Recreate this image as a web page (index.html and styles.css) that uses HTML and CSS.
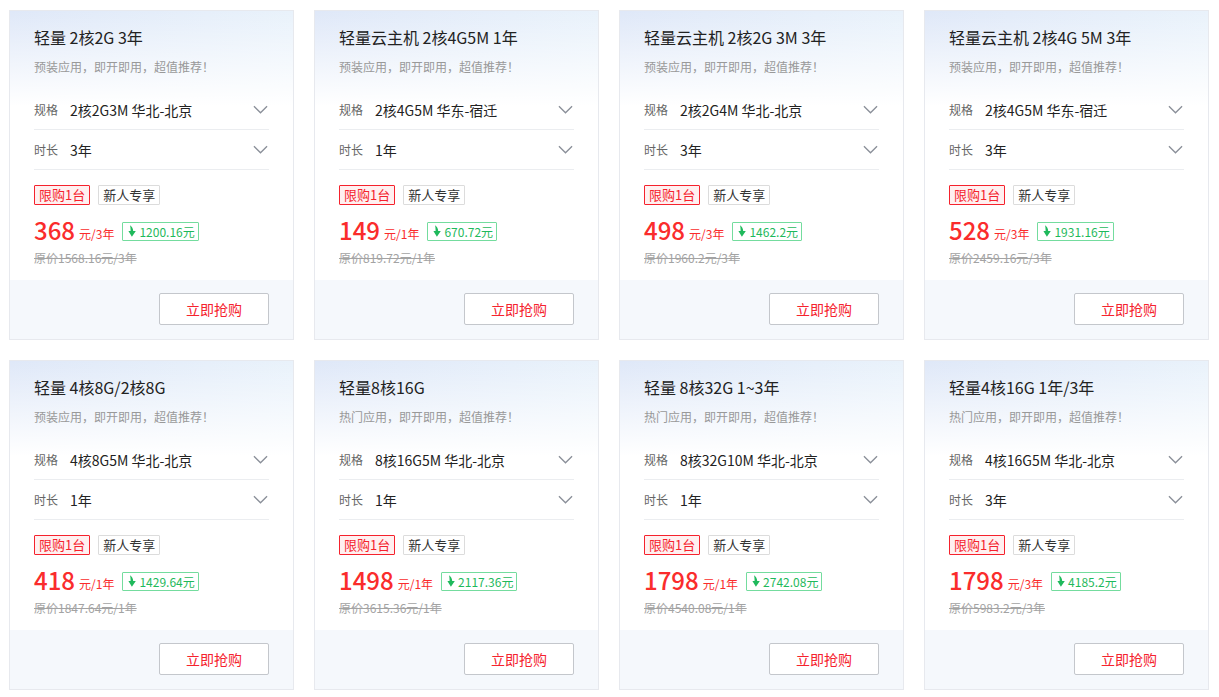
FILE: index.html
```html
<!DOCTYPE html>
<html lang="zh-CN">
<head>
<meta charset="utf-8">
<title>轻量云主机</title>
<link rel="stylesheet" href="styles.css">
</head>
<body>
<div class="grid">

  <div class="card">
    <div class="body">
      <div class="title">轻量 2核2G 3年</div>
      <div class="sub">预装应用，即开即用，超值推荐！</div>
      <div class="row"><span class="lab">规格</span><span class="val">2核2G3M 华北-北京</span><svg class="chev" viewBox="0 0 16 9"><path d="M1 1l7 7 7-7"/></svg></div>
      <div class="row"><span class="lab">时长</span><span class="val">3年</span><svg class="chev" viewBox="0 0 16 9"><path d="M1 1l7 7 7-7"/></svg></div>
      <div class="tags"><span class="tag red">限购1台</span><span class="tag gray">新人专享</span></div>
      <div class="price"><span class="num">368</span><span class="unit">元/3年</span><span class="save"><svg viewBox="0 0 8 12"><path d="M2 0.2C3.6 1.4 5.2 3.4 5.2 6H7.8L3.9 11.8 0.4 6H2.6C2.6 3.9 2.5 1.8 2 0.2z"/></svg>1200.16元</span></div>
      <div class="orig">原价1568.16元/3年</div>
    </div>
    <div class="foot"><button class="buy">立即抢购</button></div>
  </div>

  <div class="card">
    <div class="body">
      <div class="title">轻量云主机 2核4G5M 1年</div>
      <div class="sub">预装应用，即开即用，超值推荐！</div>
      <div class="row"><span class="lab">规格</span><span class="val">2核4G5M 华东-宿迁</span><svg class="chev" viewBox="0 0 16 9"><path d="M1 1l7 7 7-7"/></svg></div>
      <div class="row"><span class="lab">时长</span><span class="val">1年</span><svg class="chev" viewBox="0 0 16 9"><path d="M1 1l7 7 7-7"/></svg></div>
      <div class="tags"><span class="tag red">限购1台</span><span class="tag gray">新人专享</span></div>
      <div class="price"><span class="num">149</span><span class="unit">元/1年</span><span class="save"><svg viewBox="0 0 8 12"><path d="M2 0.2C3.6 1.4 5.2 3.4 5.2 6H7.8L3.9 11.8 0.4 6H2.6C2.6 3.9 2.5 1.8 2 0.2z"/></svg>670.72元</span></div>
      <div class="orig">原价819.72元/1年</div>
    </div>
    <div class="foot"><button class="buy">立即抢购</button></div>
  </div>

  <div class="card">
    <div class="body">
      <div class="title">轻量云主机 2核2G 3M 3年</div>
      <div class="sub">预装应用，即开即用，超值推荐！</div>
      <div class="row"><span class="lab">规格</span><span class="val">2核2G4M 华北-北京</span><svg class="chev" viewBox="0 0 16 9"><path d="M1 1l7 7 7-7"/></svg></div>
      <div class="row"><span class="lab">时长</span><span class="val">3年</span><svg class="chev" viewBox="0 0 16 9"><path d="M1 1l7 7 7-7"/></svg></div>
      <div class="tags"><span class="tag red">限购1台</span><span class="tag gray">新人专享</span></div>
      <div class="price"><span class="num">498</span><span class="unit">元/3年</span><span class="save"><svg viewBox="0 0 8 12"><path d="M2 0.2C3.6 1.4 5.2 3.4 5.2 6H7.8L3.9 11.8 0.4 6H2.6C2.6 3.9 2.5 1.8 2 0.2z"/></svg>1462.2元</span></div>
      <div class="orig">原价1960.2元/3年</div>
    </div>
    <div class="foot"><button class="buy">立即抢购</button></div>
  </div>

  <div class="card">
    <div class="body">
      <div class="title">轻量云主机 2核4G 5M 3年</div>
      <div class="sub">预装应用，即开即用，超值推荐！</div>
      <div class="row"><span class="lab">规格</span><span class="val">2核4G5M 华东-宿迁</span><svg class="chev" viewBox="0 0 16 9"><path d="M1 1l7 7 7-7"/></svg></div>
      <div class="row"><span class="lab">时长</span><span class="val">3年</span><svg class="chev" viewBox="0 0 16 9"><path d="M1 1l7 7 7-7"/></svg></div>
      <div class="tags"><span class="tag red">限购1台</span><span class="tag gray">新人专享</span></div>
      <div class="price"><span class="num">528</span><span class="unit">元/3年</span><span class="save"><svg viewBox="0 0 8 12"><path d="M2 0.2C3.6 1.4 5.2 3.4 5.2 6H7.8L3.9 11.8 0.4 6H2.6C2.6 3.9 2.5 1.8 2 0.2z"/></svg>1931.16元</span></div>
      <div class="orig">原价2459.16元/3年</div>
    </div>
    <div class="foot"><button class="buy">立即抢购</button></div>
  </div>

  <div class="card">
    <div class="body">
      <div class="title">轻量 4核8G/2核8G</div>
      <div class="sub">预装应用，即开即用，超值推荐！</div>
      <div class="row"><span class="lab">规格</span><span class="val">4核8G5M 华北-北京</span><svg class="chev" viewBox="0 0 16 9"><path d="M1 1l7 7 7-7"/></svg></div>
      <div class="row"><span class="lab">时长</span><span class="val">1年</span><svg class="chev" viewBox="0 0 16 9"><path d="M1 1l7 7 7-7"/></svg></div>
      <div class="tags"><span class="tag red">限购1台</span><span class="tag gray">新人专享</span></div>
      <div class="price"><span class="num">418</span><span class="unit">元/1年</span><span class="save"><svg viewBox="0 0 8 12"><path d="M2 0.2C3.6 1.4 5.2 3.4 5.2 6H7.8L3.9 11.8 0.4 6H2.6C2.6 3.9 2.5 1.8 2 0.2z"/></svg>1429.64元</span></div>
      <div class="orig">原价1847.64元/1年</div>
    </div>
    <div class="foot"><button class="buy">立即抢购</button></div>
  </div>

  <div class="card">
    <div class="body">
      <div class="title">轻量8核16G</div>
      <div class="sub">热门应用，即开即用，超值推荐！</div>
      <div class="row"><span class="lab">规格</span><span class="val">8核16G5M 华北-北京</span><svg class="chev" viewBox="0 0 16 9"><path d="M1 1l7 7 7-7"/></svg></div>
      <div class="row"><span class="lab">时长</span><span class="val">1年</span><svg class="chev" viewBox="0 0 16 9"><path d="M1 1l7 7 7-7"/></svg></div>
      <div class="tags"><span class="tag red">限购1台</span><span class="tag gray">新人专享</span></div>
      <div class="price"><span class="num">1498</span><span class="unit">元/1年</span><span class="save"><svg viewBox="0 0 8 12"><path d="M2 0.2C3.6 1.4 5.2 3.4 5.2 6H7.8L3.9 11.8 0.4 6H2.6C2.6 3.9 2.5 1.8 2 0.2z"/></svg>2117.36元</span></div>
      <div class="orig">原价3615.36元/1年</div>
    </div>
    <div class="foot"><button class="buy">立即抢购</button></div>
  </div>

  <div class="card">
    <div class="body">
      <div class="title">轻量 8核32G 1~3年</div>
      <div class="sub">热门应用，即开即用，超值推荐！</div>
      <div class="row"><span class="lab">规格</span><span class="val">8核32G10M 华北-北京</span><svg class="chev" viewBox="0 0 16 9"><path d="M1 1l7 7 7-7"/></svg></div>
      <div class="row"><span class="lab">时长</span><span class="val">1年</span><svg class="chev" viewBox="0 0 16 9"><path d="M1 1l7 7 7-7"/></svg></div>
      <div class="tags"><span class="tag red">限购1台</span><span class="tag gray">新人专享</span></div>
      <div class="price"><span class="num">1798</span><span class="unit">元/1年</span><span class="save"><svg viewBox="0 0 8 12"><path d="M2 0.2C3.6 1.4 5.2 3.4 5.2 6H7.8L3.9 11.8 0.4 6H2.6C2.6 3.9 2.5 1.8 2 0.2z"/></svg>2742.08元</span></div>
      <div class="orig">原价4540.08元/1年</div>
    </div>
    <div class="foot"><button class="buy">立即抢购</button></div>
  </div>

  <div class="card">
    <div class="body">
      <div class="title">轻量4核16G 1年/3年</div>
      <div class="sub">热门应用，即开即用，超值推荐！</div>
      <div class="row"><span class="lab">规格</span><span class="val">4核16G5M 华北-北京</span><svg class="chev" viewBox="0 0 16 9"><path d="M1 1l7 7 7-7"/></svg></div>
      <div class="row"><span class="lab">时长</span><span class="val">3年</span><svg class="chev" viewBox="0 0 16 9"><path d="M1 1l7 7 7-7"/></svg></div>
      <div class="tags"><span class="tag red">限购1台</span><span class="tag gray">新人专享</span></div>
      <div class="price"><span class="num">1798</span><span class="unit">元/3年</span><span class="save"><svg viewBox="0 0 8 12"><path d="M2 0.2C3.6 1.4 5.2 3.4 5.2 6H7.8L3.9 11.8 0.4 6H2.6C2.6 3.9 2.5 1.8 2 0.2z"/></svg>4185.2元</span></div>
      <div class="orig">原价5983.2元/3年</div>
    </div>
    <div class="foot"><button class="buy">立即抢购</button></div>
  </div>

</div>
</body>
</html>
```
FILE: styles.css
```css
* { box-sizing: border-box; }
html, body { margin: 0; padding: 0; background: #fff; }
body {
  font-family: "Noto Sans CJK SC", "Microsoft YaHei", "Noto Sans", sans-serif;
  color: #333;
}
.grid {
  display: grid;
  grid-template-columns: repeat(4, 285px);
  column-gap: 20px;
  row-gap: 20px;
  padding: 10px 0 0 9px;
}
.card {
  height: 330px;
  border: 1px solid #e7e9ee;
  display: flex;
  flex-direction: column;
  background: linear-gradient(180deg, rgba(255,255,255,0) 0, #fff 95px),
              linear-gradient(90deg, #dfe8f8 0, #e9f2fb 100%);
}
.body {
  flex: 1;
  padding: 14px 24px 0 24px;
}
.title {
  font-size: 16px;
  line-height: 24px;
  color: #222;
}
.sub {
  margin-top: 9px;
  font-size: 12px;
  line-height: 18px;
  color: #999;
}
.row {
  display: flex;
  align-items: center;
  height: 40px;
  border-bottom: 1px solid #ebedf0;
}
.sub + .row { margin-top: 14px; }
.lab { color: #666; width: 36px; font-size: 12px; }
.val { color: #222; flex: 1; font-size: 14px; }
.chev {
  width: 15px;
  height: 9px;
  margin-right: 1px;
  fill: none;
  stroke: #8a8f99;
  stroke-width: 1.4;
}
.tags {
  display: flex;
  gap: 8px;
  margin-top: 15px;
}
.tag {
  font-size: 13px;
  line-height: 18px;
  height: 20px;
  padding: 0 4px;
  border: 1px solid #ddd;
  border-radius: 1px;
}
.tag.red { color: #f5222d; border-color: #f5222d; background: #fff0f0; }
.tag.gray { color: #333; border-color: #dcdcdc; background: #fff; }
.price {
  display: flex;
  align-items: center;
  margin-top: 8px;
  height: 34px;
}
.num {
  font-size: 24px;
  line-height: 34px;
  color: #fa2c2c;
  font-weight: 500;
}
.unit {
  font-size: 12px;
  color: #fa2c2c;
  margin-left: 4px;
  margin-top: 6px;
}
.save {
  display: inline-flex;
  align-items: center;
  margin-left: 8px;
  margin-top: 2px;
  height: 19px;
  padding: 0 3px 0 5px;
  border: 1px solid #74dc9e;
  border-radius: 1px;
  color: #1fb95c;
  font-size: 12px;
}
.save svg {
  width: 8px;
  height: 12px;
  margin-right: 3px;
  fill: #1fb95c;
}
.orig {
  margin-top: 2px;
  font-size: 12px;
  line-height: 18px;
  color: #a3a3a3;
  text-decoration: line-through;
}
.foot {
  height: 59px;
  background: #f5f8fc;
  display: flex;
  align-items: center;
  justify-content: flex-end;
  padding-right: 24px;
  padding-bottom: 2px;
}
.buy {
  width: 110px;
  height: 32px;
  background: #fff;
  border: 1px solid #c4c7cc;
  border-radius: 2px;
  color: #f5222d;
  font-family: inherit;
  font-size: 14px;
  cursor: pointer;
}
```
